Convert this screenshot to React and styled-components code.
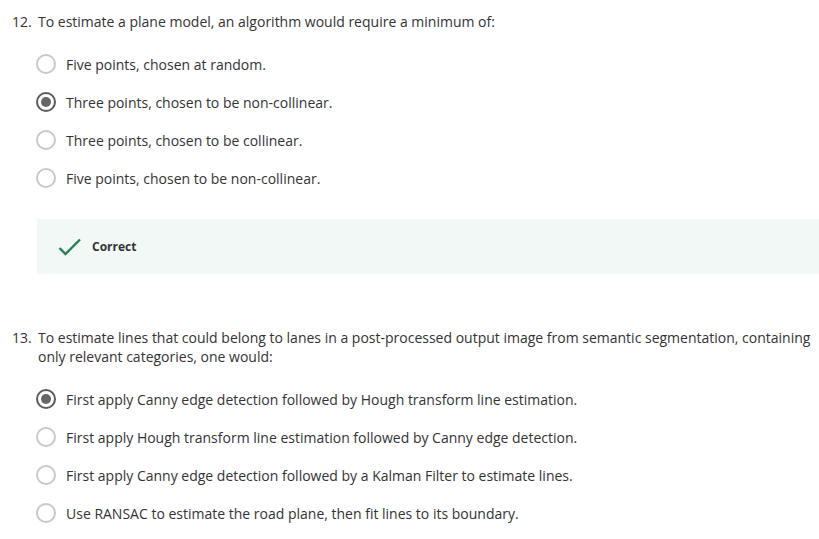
import React from 'react';
import styled, { createGlobalStyle } from 'styled-components';

const GlobalStyle = createGlobalStyle`
  body {
    margin: 0;
    background: #ffffff;
    font-family: 'Open Sans', 'Liberation Sans', sans-serif;
    color: #333333;
  }
`;

const Page = styled.div`
  width: 819px;
  padding-top: 12px;
`;

const Question = styled.div`
  margin-bottom: ${props => props.gap || 0}px;
`;

const Prompt = styled.div`
  display: flex;
  font-size: 14px;
  line-height: 19px;
  padding-left: 12px;
  padding-right: 8px;
`;

const Number = styled.span`
  flex: 0 0 26px;
`;

const Options = styled.div`
  display: flex;
  flex-direction: column;
  margin-top: 14px;
  padding-left: 36px;
`;

const Option = styled.label`
  display: flex;
  align-items: center;
  height: 38px;
  font-size: 14px;
  gap: 10px;
`;

const Radio = styled.span`
  box-sizing: border-box;
  width: 20px;
  height: 20px;
  border-radius: 50%;
  border: 2px solid ${props => (props.checked ? '#5c5c5c' : '#c9c9c9')};
  display: flex;
  align-items: center;
  justify-content: center;
  flex-shrink: 0;

  &::after {
    content: '';
    display: ${props => (props.checked ? 'block' : 'none')};
    width: 10px;
    height: 10px;
    border-radius: 50%;
    background: #666666;
  }
`;

const Feedback = styled.div`
  display: flex;
  align-items: center;
  gap: 10px;
  margin: 22px 0 0 37px;
  height: 55px;
  padding-left: 21px;
  background: #f2f8f6;
  font-size: 12px;
  font-weight: 700;
`;

const CheckIcon = () => (
  <svg width="24" height="20" viewBox="0 0 24 20" fill="none">
    <path d="M1.5 11 L7.5 17 L22 2.5" stroke="#1f8354" strokeWidth="2.4" />
  </svg>
);

const questions = [
  {
    num: '12.',
    text: 'To estimate a plane model, an algorithm would require a minimum of:',
    options: [
      'Five points, chosen at random.',
      'Three points, chosen to be non-collinear.',
      'Three points, chosen to be collinear.',
      'Five points, chosen to be non-collinear.',
    ],
    selected: 1,
    feedback: 'Correct',
  },
  {
    num: '13.',
    text: 'To estimate lines that could belong to lanes in a post-processed output image from semantic segmentation, containing only relevant categories, one would:',
    options: [
      'First apply Canny edge detection followed by Hough transform line estimation.',
      'First apply Hough transform line estimation followed by Canny edge detection.',
      'First apply Canny edge detection followed by a Kalman Filter to estimate lines.',
      'Use RANSAC to estimate the road plane, then fit lines to its boundary.',
    ],
    selected: 0,
  },
];

const App = () => (
  <>
    <GlobalStyle />
    <Page>
      {questions.map(q => (
        <Question key={q.num} gap={q.feedback ? 54 : 0}>
          <Prompt>
            <Number>{q.num}</Number>
            <span>{q.text}</span>
          </Prompt>
          <Options>
            {q.options.map((opt, i) => (
              <Option key={opt}>
                <Radio checked={i === q.selected} />
                {opt}
              </Option>
            ))}
          </Options>
          {q.feedback && (
            <Feedback>
              <CheckIcon />
              {q.feedback}
            </Feedback>
          )}
        </Question>
      ))}
    </Page>
  </>
);

export default App;
